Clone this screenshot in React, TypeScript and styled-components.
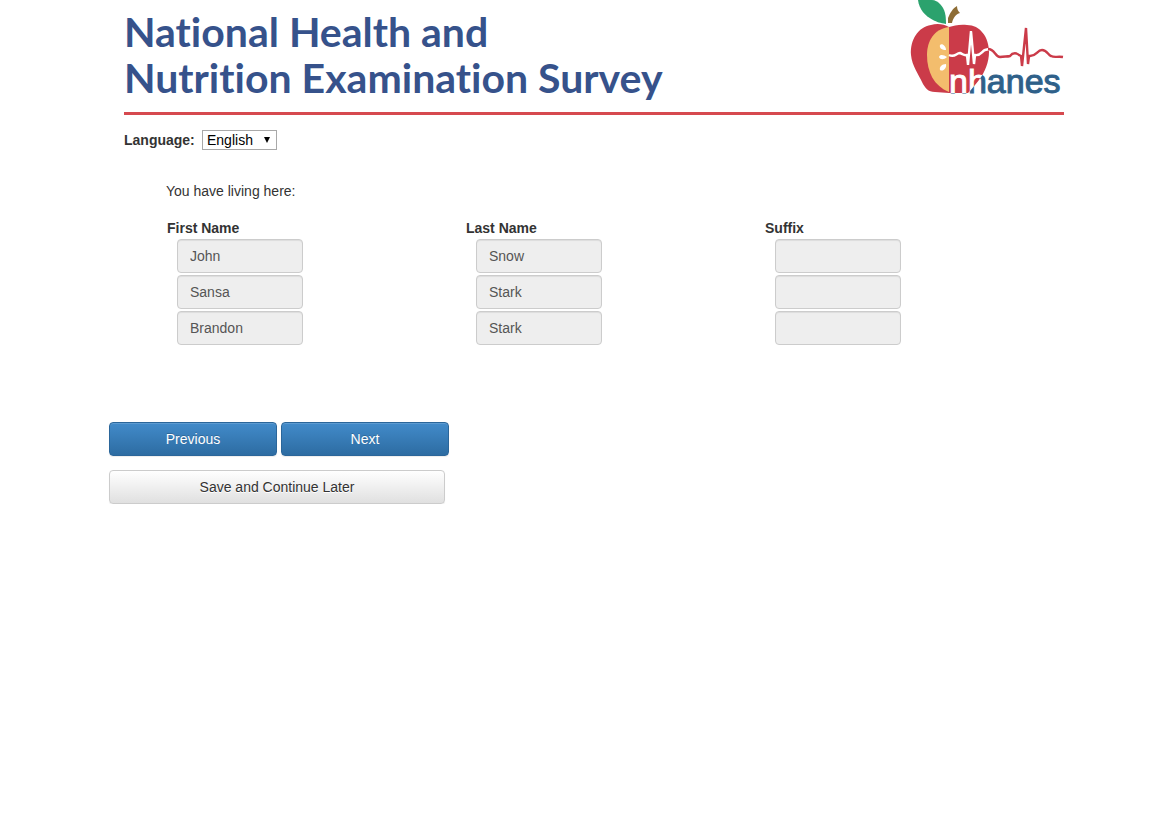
import React from "react";
import styled, { createGlobalStyle, css } from "styled-components";

const GlobalStyle = createGlobalStyle`
  *, *::before, *::after { box-sizing: border-box; }
  body {
    margin: 0;
    background: #fff;
    color: #333;
    font: 14px/20px "Liberation Sans", Arial, sans-serif;
  }
`;

const Page = styled.div`
  padding: 0 90px 0 109px;
`;

const Inset = styled.div`
  padding: 0 15px;
`;

const Banner = styled.header`
  display: flex;
  justify-content: space-between;
  align-items: flex-start;
  border-bottom: 3px solid #d6494f;
`;

const Title = styled.h1`
  margin: 0;
  padding: 9px 0 11px;
  color: #36528b;
  font: 700 41px/46px Lato, sans-serif;
  font-variant-ligatures: none;
`;

const Logo = styled.svg`
  display: block;
  flex: none;
  width: 160px;
  height: 112px;
`;

const LanguageBar = styled.div`
  display: flex;
  align-items: center;
  gap: 4px;
  padding-top: 15px;
`;

const LanguageLabel = styled.label`
  min-width: 74px;
  font-weight: 700;
`;

const SelectBox = styled.div`
  position: relative;
`;

const Select = styled.select`
  display: block;
  appearance: none;
  width: 75px;
  height: 20px;
  margin: 0;
  padding: 0 20px 0 4px;
  border: 1px solid #a9a9a9;
  border-radius: 0;
  background: #fff;
  color: #000;
  font: inherit;
  line-height: 18px;
`;

const SelectArrow = styled.svg`
  position: absolute;
  top: 7px;
  right: 6px;
  width: 8px;
  height: 6px;
  pointer-events: none;
`;

const Household = styled.section`
  padding: 31px 1px 0 42px;
`;

const Intro = styled.p`
  margin: 0 0 16px;
`;

const PeopleTable = styled.table`
  width: 100%;
  table-layout: fixed;
  border-collapse: collapse;
`;

const HeadCell = styled.th`
  padding: 1px 1px 0;
  text-align: left;
  font-weight: 700;
`;

const Cell = styled.td`
  padding: 1px 1px 1px 11px;
`;

const Field = styled.input`
  display: block;
  width: 126px;
  height: 34px;
  padding: 6px 12px;
  border: 1px solid #ccc;
  border-radius: 4px;
  background: #eee;
  box-shadow: inset 0 1px 1px rgba(0, 0, 0, 0.075);
  color: #555;
  font: inherit;
`;

const Actions = styled.div`
  display: flex;
  flex-wrap: wrap;
  gap: 14px 4px;
  max-width: 340px;
  padding-top: 76px;
`;

const Button = styled.button<{ $primary?: boolean }>`
  height: 34px;
  padding: 6px 12px;
  border: 1px solid #ccc;
  border-radius: 4px;
  box-shadow: inset 0 1px 0 rgba(255, 255, 255, 0.15), 0 1px 1px rgba(0, 0, 0, 0.075);
  font: inherit;
  cursor: pointer;
  ${({ $primary }) =>
    $primary
      ? css`
          width: 168px;
          border-color: #2b669a;
          background: linear-gradient(#428bca, #2d6ca2);
          color: #fff;
          text-shadow: 0 -1px 0 rgba(0, 0, 0, 0.2);
        `
      : css`
          width: 336px;
          background: linear-gradient(#fff, #e0e0e0);
          color: #333;
          text-shadow: 0 1px 0 #fff;
        `}
`;

const columns = ["First Name", "Last Name", "Suffix"];

const people = [
  ["John", "Snow", ""],
  ["Sansa", "Stark", ""],
  ["Brandon", "Stark", ""],
];

const applePath =
  "M949 27C944 24 937 23 931 25C918 27 910 40 911 55C912 66 919 75 922 82C925 88 928 92 935 92L949 93H968C971 90 975 85 979 80C985 72 989 62 989 52C989 37 980 25 967 25C959 24 954 26 949 27Z";

function NhanesLogo() {
  return (
    <Logo viewBox="904 0 160 112" role="img" aria-label="nhanes">
      <defs>
        {/* Lettering turns white where it crosses the apple */}
        <pattern id="lettering" patternUnits="userSpaceOnUse" x="904" y="0" width="160" height="112">
          <rect width="160" height="112" fill="#2f6089" />
          <path d={applePath} fill="#fff" transform="translate(-904 0)" />
        </pattern>
      </defs>
      <path d={applePath} fill="#cb3b49" />
      <path d="M949 27C934 29 927 41 927 55C927 72 934 86 949 92Z" fill="#f3bd6d" />
      <path d="M918 0H932C935 0 938 2 940 4C945 9 946 15 946 24C940 23 937 22 933 20C925 16 919 9 918 0Z" fill="#2ba26d" />
      <path d="M948 23V18C950 13 953 8 957 6C957 9 958 11 960 13C956 14 953 18 952 23Z" fill="#8e6d35" />
      <g fill="#fff">
        <path d="M940 45C942 43 946 46 946 50C942 50 939 48 940 45Z" />
        <path d="M939 57C940 54 944 55 947 57C944 60 940 60 939 57Z" />
        <path d="M940 70C939 67 942 64 946 64C947 68 943 72 940 70Z" />
      </g>
      <path
        d="M949 55C955 58 956 53 960 53C963 54 964 56 967 55L968 65L971 31L974 64L975 55C981 56 982 51 985 50L989 49"
        fill="none"
        stroke="#fff"
        strokeWidth="2.4"
      />
      <path
        d="M988 49C995 49 995 57 1000 57C1004 56 1007 57 1010 56C1013 52 1017 53 1019 55L1021 56L1022 66L1026 28L1028 64L1029 56C1036 57 1037 50 1042 50C1047 50 1048 55 1051 56C1055 58 1057 56 1063 57"
        fill="none"
        stroke="#cb3b49"
        strokeWidth="2.4"
      />
      <text
        x="949"
        y="93"
        fontFamily="Liberation Sans, Arial, sans-serif"
        fontSize="34"
        fill="url(#lettering)"
        stroke="url(#lettering)"
        strokeWidth="1"
      >
        nhanes
      </text>
    </Logo>
  );
}

export default function App() {
  return (
    <>
      <GlobalStyle />
      <Page>
        <Inset>
          <Banner>
            <Title>
              National Health and
              <br />
              Nutrition Examination Survey
            </Title>
            <NhanesLogo />
          </Banner>
          <LanguageBar>
            <LanguageLabel htmlFor="language">Language:</LanguageLabel>
            <SelectBox>
              <Select id="language" defaultValue="English">
                <option>English</option>
              </Select>
              <SelectArrow viewBox="0 0 8 6" aria-hidden="true">
                <path d="M1 0H7L4 6Z" fill="#000" />
              </SelectArrow>
            </SelectBox>
          </LanguageBar>
          <Household>
            <Intro>You have living here:</Intro>
            <PeopleTable>
              <thead>
                <tr>
                  {columns.map((name) => (
                    <HeadCell key={name} scope="col">
                      {name}
                    </HeadCell>
                  ))}
                </tr>
              </thead>
              <tbody>
                {people.map((person, row) => (
                  <tr key={row}>
                    {person.map((value, col) => (
                      <Cell key={col}>
                        <Field
                          type="text"
                          aria-label={`${columns[col]}, person ${row + 1}`}
                          defaultValue={value}
                          disabled
                        />
                      </Cell>
                    ))}
                  </tr>
                ))}
              </tbody>
            </PeopleTable>
          </Household>
        </Inset>
        <Actions>
          <Button type="button" $primary>
            Previous
          </Button>
          <Button type="button" $primary>
            Next
          </Button>
          <Button type="button">Save and Continue Later</Button>
        </Actions>
      </Page>
    </>
  );
}
